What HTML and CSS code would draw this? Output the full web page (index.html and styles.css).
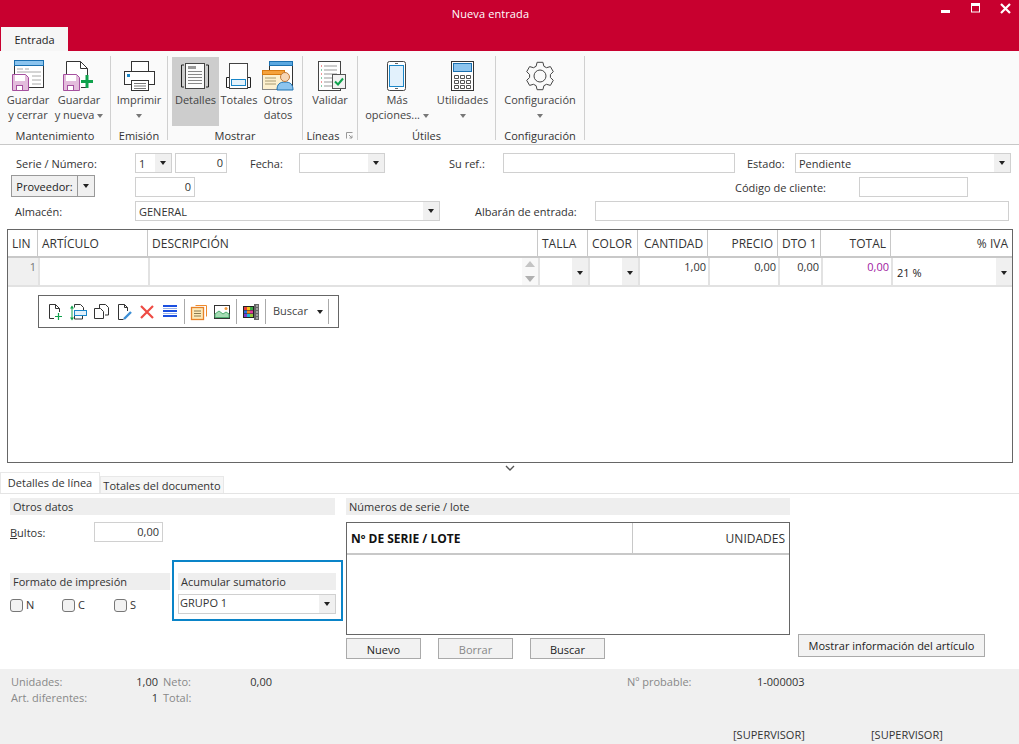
FILE: index.html
```html
<!DOCTYPE html>
<html lang="es">
<head>
    <meta charset="UTF-8">
    <title>Nueva entrada</title>
    <link rel="stylesheet" href="styles.css">
</head>
<body>
<div class="app">
    <header class="titlebar">
        <div class="title">Nueva entrada</div>
        <div class="win-btns">
            <svg width="10" height="10" viewBox="0 0 10 10"><rect x="0" y="7" width="9" height="3" fill="#fff"/></svg>
            <svg width="10" height="10" viewBox="0 0 10 10"><rect x="0.5" y="1" width="8" height="8" fill="none" stroke="#fff"/><rect x="0" y="0" width="9" height="3" fill="#fff"/></svg>
            <svg width="11" height="11" viewBox="0 0 11 11"><path d="M1 1l9 9M10 1l-9 9" stroke="#fff" stroke-width="2.2"/></svg>
        </div>
    </header>
    <div class="tabstrip"><div class="tab-main">Entrada</div></div>

    <div class="ribbon">
        <div class="rb-group g-mant">
            <div class="rb-btns">
                <div class="rb-btn b-48">
                    <svg class="rb-icon" viewBox="0 0 40 36"><rect x="6.5" y="2.5" width="29" height="27" fill="#fff" stroke="#333"/><rect x="6.5" y="2.5" width="29" height="5" fill="#8cc4ee" stroke="#1a70b0"/><path d="M9 11h6M17 11h4M9 14h24M24 18h9M24 22h9M24 26h9" stroke="#aaa"/><path d="M4.5 16.5h13l3 3v13h-16z" fill="#e3bcdc" stroke="#a5509f"/><rect x="7" y="17" width="10" height="6" fill="#fff"/><rect x="8.5" y="27.5" width="6" height="5" fill="#fff" stroke="#a5509f"/></svg>
                    <span>Guardar<br>y cerrar</span>
                </div>
                <div class="rb-btn b-50 b-gap">
                    <svg class="rb-icon" viewBox="0 0 40 36"><path d="M7.5 16V3.5h14l7 7V29.5H22" fill="#fff" stroke="#333"/><path d="M21.5 3.5v7h7" fill="none" stroke="#333"/><path d="M4.5 16.5h13l3 3v13h-16z" fill="#e3bcdc" stroke="#a5509f"/><rect x="7" y="17" width="10" height="6" fill="#fff"/><rect x="8.5" y="27.5" width="6" height="5" fill="#fff" stroke="#a5509f"/><path d="M28 17v13M22 23.5h12" stroke="#0fa24c" stroke-width="3"/></svg>
                    <span>Guardar<br>y nueva <i class="caret gray"></i></span>
                </div>
            </div>
            <div class="rb-label">Mantenimiento</div>
        </div>
        <div class="rb-group g-emis">
            <div class="rb-btns">
                <div class="rb-btn b-52">
                    <svg class="rb-icon" viewBox="0 0 40 36"><rect x="12.5" y="3.5" width="17" height="11" fill="#fff" stroke="#333"/><rect x="5.5" y="13.5" width="30" height="13" fill="#fff" stroke="#333"/><rect x="8" y="16" width="3" height="3" fill="#1a86c8"/><rect x="12.5" y="22.5" width="17" height="10" fill="#fff" stroke="#333"/><path d="M15 25.5h12M15 28h12M15 30.5h12" stroke="#777"/></svg>
                    <span>Imprimir<br><i class="caret gray"></i></span>
                </div>
            </div>
            <div class="rb-label">Emisión</div>
        </div>
        <div class="rb-group g-most">
            <div class="rb-btns">
                <div class="rb-btn b-47 active">
                    <svg class="rb-icon" viewBox="0 0 40 36"><rect x="9.5" y="5.5" width="19" height="25" fill="#fbfbfb" stroke="#444"/><rect x="12" y="8" width="8" height="3" fill="#999"/><path d="M12 13.5h14M12 16.5h14M12 19.5h14M12 22.5h14M12 25.5h14" stroke="#888"/><path d="M8 7H5.5v22H8M30 7h2.5v22H30" fill="none" stroke="#222"/></svg>
                    <span>Detalles</span>
                </div>
                <div class="rb-btn b-40">
                    <svg class="rb-icon" viewBox="0 0 40 36"><rect x="10.5" y="5.5" width="18" height="25" fill="#fff" stroke="#444"/><rect x="12.5" y="21.5" width="14" height="6" fill="#e4f2fb" stroke="#1a86c8"/><path d="M10 19.500H7.500v10H10M29 19.500h2.500v10H29" fill="none" stroke="#222"/></svg>
                    <span>Totales</span>
                </div>
                <div class="rb-btn b-38">
                    <svg class="rb-icon" viewBox="0 0 40 36"><rect x="10.500" y="3.500" width="23" height="24" fill="#fff" stroke="#333"/><rect x="10.500" y="3.500" width="23" height="4" fill="#5aa8e0" stroke="#1a70b0"/><rect x="3.500" y="13.500" width="22" height="18" fill="#fdf0cf" stroke="#888"/><rect x="3.500" y="12.500" width="22" height="4" fill="#f5a23c" stroke="#d87b10"/><path d="M6 20h11M6 23h11M6 26h11" stroke="#a89a70"/><path d="M18 32c0-6 3-8 8-8s8 2 8 8z" fill="#8cc4ee" stroke="#1a70b0"/><circle cx="26" cy="19" r="4.500" fill="#f7d6b5" stroke="#c07a3c"/></svg>
                    <span>Otros<br>datos</span>
                </div>
            </div>
            <div class="rb-label">Mostrar</div>
        </div>
        <div class="rb-group g-line">
            <div class="rb-btns">
                <div class="rb-btn b-50">
                    <svg class="rb-icon" viewBox="0 0 40 36"><rect x="8.500" y="3.500" width="22" height="29" fill="#fff" stroke="#444"/><path d="M14 8h13M14 12h13M14 16h13M14 20h8M14 24h8M14 28h8" stroke="#999"/><path d="M11 8h1M11 16h1M11 24h1" stroke="#d33"/><path d="M11 12h1M11 20h1M11 28h1" stroke="#0a9a50"/><rect x="22.500" y="16.500" width="13" height="14" fill="#f2f2f2" stroke="#555"/><path d="M25 23.500l3 3 5-6" fill="none" stroke="#0fa24c" stroke-width="2"/></svg>
                    <span>Validar</span>
                </div>
            </div>
            <div class="rb-label">Líneas<svg class="launcher" width="7" height="7" viewBox="0 0 7 7"><path d="M0.500 6.500v-6h6M3 3l3 3M6 3.500v2.500H3.500" fill="none" stroke="#999"/></svg></div>
        </div>
        <div class="rb-group g-util">
            <div class="rb-btns">
                <div class="rb-btn b-70">
                    <svg class="rb-icon" viewBox="0 0 40 36"><rect x="10.500" y="3.500" width="18" height="29" rx="2" fill="#fff" stroke="#444"/><rect x="12.500" y="7.500" width="14" height="21" fill="#e2f1fc" stroke="#1a86c8"/><path d="M18 5.500h3M18 30.500h3" stroke="#666"/></svg>
                    <span>Más<br>opciones... <i class="caret gray"></i></span>
                </div>
                <div class="rb-btn b-57 b-gap">
                    <svg class="rb-icon" viewBox="0 0 40 36"><rect x="8.500" y="3.500" width="22" height="29" fill="#fff" stroke="#333"/><rect x="10.500" y="5.500" width="18" height="8" fill="#8cc4ee" stroke="#1a70b0"/><path d="M11.500 17.500h4v3h-4zM17.500 17.500h4v3h-4zM23.500 17.500h4v3h-4zM11.500 22.500h4v3h-4zM17.500 22.500h4v3h-4zM23.500 22.500h4v3h-4zM11.500 27.500h4v3h-4zM17.500 27.500h4v3h-4zM23.500 27.500h4v3h-4z" fill="none" stroke="#555"/></svg>
                    <span>Utilidades<br><i class="caret gray"></i></span>
                </div>
            </div>
            <div class="rb-label">Útiles</div>
        </div>
        <div class="rb-group g-conf">
            <div class="rb-btns">
                <div class="rb-btn b-88">
                    <svg class="rb-icon" viewBox="0 0 40 36"><g transform="translate(20 18)" fill="none" stroke="#444" stroke-linejoin="round"><polygon points="-3.900,-9.700 -2.900,-13.700 2.900,-13.700 3.900,-9.700 6.500,-8.300 10.400,-9.400 13.300,-4.300 10.400,-1.500 10.400,1.500 13.300,4.300 10.400,9.400 6.500,8.300 3.900,9.700 2.900,13.700 -2.900,13.700 -3.900,9.700 -6.500,8.300 -10.400,9.400 -13.300,4.300 -10.400,1.500 -10.400,-1.500 -13.300,-4.300 -10.400,-9.400 -6.500,-8.300"/><circle r="6"/></g></svg>
                    <span>Configuración<br><i class="caret gray"></i></span>
                </div>
            </div>
            <div class="rb-label">Configuración</div>
        </div>
    </div>

    <div class="form">
        <div class="form-row">
            <label class="lbl-serie">Serie / Número:</label>
            <div class="combo w-num"><span>1</span><b><i class="caret"></i></b></div>
            <div class="input num w-numero">0</div>
            <label class="lbl-fecha">Fecha:</label>
            <div class="combo w-fecha"><span></span><b><i class="caret"></i></b></div>
            <label class="lbl-suref">Su ref.:</label>
            <div class="input w-suref"></div>
            <label class="lbl-estado">Estado:</label>
            <div class="combo w-estado"><span>Pendiente</span><b><i class="caret"></i></b></div>
        </div>
        <div class="form-row row-2">
            <div class="split-btn"><span>Proveedor:</span><b><i class="caret"></i></b></div>
            <div class="input num w-prov">0</div>
            <label class="lbl-codigo">Código de cliente:</label>
            <div class="input w-codigo"></div>
        </div>
        <div class="form-row row-3">
            <label class="lbl-almacen">Almacén:</label>
            <div class="combo w-almacen"><span>GENERAL</span><b><i class="caret"></i></b></div>
            <label class="lbl-albaran">Albarán de entrada:</label>
            <div class="input w-albaran"></div>
        </div>
    </div>

    <div class="lines">
        <div class="lines-head">
            <div>LIN</div>
            <div>ARTÍCULO</div>
            <div>DESCRIPCIÓN</div>
            <div>TALLA</div>
            <div>COLOR</div>
            <div class="h-cant">CANTIDAD</div>
            <div class="right">PRECIO</div>
            <div class="center">DTO 1</div>
            <div class="right">TOTAL</div>
            <div class="right">% IVA</div>
        </div>
        <div class="lines-row">
            <div class="cell-lin">1</div>
            <div></div>
            <div class="cell-desc">
                <div class="spin"><i class="tri up"></i><i class="tri down"></i></div>
            </div>
            <div class="cell-combo"><b><i class="caret"></i></b></div>
            <div class="cell-combo"><b><i class="caret"></i></b></div>
            <div class="right">1,00</div>
            <div class="right">0,00</div>
            <div class="right">0,00</div>
            <div class="right purple">0,00</div>
            <div class="cell-combo cell-iva"><span>21 %</span><b><i class="caret"></i></b></div>
        </div>
        <div class="toolbar">
            <svg width="18" height="18" viewBox="0 0 18 18"><path d="M8 15.500H3.500v-14h6l4 4V9M9.500 1.500v4h4" fill="none" stroke="#333"/><path d="M12.500 10v7M9 13.500h7" stroke="#0fa24c" stroke-width="1.200"/></svg>
            <svg width="18" height="18" viewBox="0 0 18 18"><path d="M5.500 4.500v-3h6l3 3V7M5.500 13v3h8v-3" fill="none" stroke="#333"/><rect x="5.500" y="7.500" width="12" height="5" fill="#e2f1fc" stroke="#1a86c8"/><path d="M3 3.500v12" stroke="#0fa24c"/><path d="M1 5.500l2-3 2 3zM1 14.500l2 3 2-3z" fill="#0fa24c"/></svg>
            <svg width="18" height="18" viewBox="0 0 18 18"><path d="M7.500 5V1.500h6l3 3V12H13" fill="none" stroke="#333"/><path d="M2.500 5.500h6l3 3v7h-9z" fill="#fff" stroke="#333"/></svg>
            <svg width="18" height="18" viewBox="0 0 18 18"><path d="M3.500 16.500v-15h6l3 3V8M3.500 16.500h5M9.500 1.500v3h3" fill="none" stroke="#333"/><path d="M9 16l7-7" stroke="#3d8fd6" stroke-width="2.400"/></svg>
            <svg width="18" height="18" viewBox="0 0 18 18"><path d="M3 3l12 12M15 3L3 15" stroke="#ee4b44" stroke-width="2.200"/></svg>
            <svg width="18" height="18" viewBox="0 0 18 18"><path d="M2 3h14M2 8h14M2 13h14" stroke="#1b4fe0" stroke-width="2"/><path d="M2 5.500h14M2 10.500h14" stroke="#9db4e8"/></svg>
            <i class="tb-sep"></i>
            <svg width="18" height="18" viewBox="0 0 18 18"><path d="M5.500 2.500h11v11" fill="none" stroke="#ee8a2c"/><rect x="1.500" y="4.500" width="12" height="12" fill="#fde9b8" stroke="#e6822a" stroke-width="1.300"/><path d="M4 8h7M4 10.500h7M4 13h7" stroke="#8a7a50"/></svg>
            <svg width="18" height="18" viewBox="0 0 18 18"><rect x="1.500" y="2.500" width="15" height="13" fill="#fff" stroke="#333"/><path d="M2 14.500V11l4-3 4 3 3-2 3 2v3.500z" fill="#a5dcb4" stroke="#4fae70"/><circle cx="13" cy="5.500" r="1.500" fill="#f59a3c"/></svg>
            <i class="tb-sep"></i>
            <svg width="18" height="18" viewBox="0 0 18 18"><rect x="1" y="3" width="11" height="12" fill="#222"/><rect x="2" y="4" width="3" height="3" fill="#e53a3a"/><rect x="5" y="4" width="3" height="3" fill="#f2c21c"/><rect x="8" y="4" width="3" height="3" fill="#39a845"/><rect x="2" y="7.500" width="3" height="3" fill="#2a6fe0"/><rect x="5" y="7.500" width="3" height="3" fill="#f08a1c"/><rect x="8" y="7.500" width="3" height="3" fill="#e53a9a"/><rect x="2" y="11" width="3" height="3" fill="#7a3ac8"/><rect x="5" y="11" width="3" height="3" fill="#1cb8d8"/><rect x="8" y="11" width="3" height="3" fill="#90c83a"/><rect x="12" y="1" width="5" height="16" fill="#666"/><path d="M14 3h2M14 6h2M14 9h2M14 12h2M14 15h2" stroke="#ddd"/></svg>
            <i class="tb-sep"></i>
            <span class="tb-text">Buscar</span>
            <i class="caret tb-caret"></i>
            <i class="tb-sep"></i>
        </div>
    </div>

    <div class="splitter"><svg width="10" height="6" viewBox="0 0 10 6"><path d="M1 1l4 4 4-4" fill="none" stroke="#555" stroke-width="1.400"/></svg></div>

    <div class="tabs2">
        <div class="tab2 on">Detalles de línea</div>
        <div class="tab2">Totales del documento</div>
    </div>

    <div class="detail">
        <div class="col-left">
            <div class="sect w-otros">Otros datos</div>
            <div class="bultos">
                <label><u>B</u>ultos:</label>
                <div class="input num w-bultos">0,00</div>
            </div>
            <div class="col-left-low">
                <div class="formato">
                    <div class="sect">Formato de impresión</div>
                    <div class="checks">
                        <div class="check"><i></i>N</div>
                        <div class="check"><i></i>C</div>
                        <div class="check"><i></i>S</div>
                    </div>
                </div>
                <div class="acumular">
                    <div class="sect">Acumular sumatorio</div>
                    <div class="combo w-grupo"><span>GRUPO 1</span><b><i class="caret"></i></b></div>
                </div>
            </div>
        </div>
        <div class="col-mid">
            <div class="sect">Números de serie / lote</div>
            <div class="serie-table">
                <div class="serie-head">
                    <div class="serie-c1">Nº DE SERIE / LOTE</div>
                    <div class="serie-c2">UNIDADES</div>
                </div>
            </div>
            <div class="serie-btns">
                <div class="btn">Nuevo</div>
                <div class="btn disabled">Borrar</div>
                <div class="btn">Buscar</div>
            </div>
        </div>
        <div class="col-right">
            <div class="btn btn-info">Mostrar información del artículo</div>
        </div>
    </div>

    <footer class="statusbar">
        <div class="st-row">
            <span class="st-label w-a">Unidades:</span><span class="st-val w-b">1,00</span>
            <span class="st-label w-c">Neto:</span><span class="st-val w-d">0,00</span>
            <span class="st-label w-e">Nº probable:</span><span class="st-text">1-000003</span>
        </div>
        <div class="st-row row-art">
            <span class="st-label w-a">Art. diferentes:</span><span class="st-val w-b">1</span>
            <span class="st-label w-c">Total:</span>
        </div>
        <div class="st-row row-user">
            <span class="st-text w-user">[SUPERVISOR]</span>
            <span class="st-text">[SUPERVISOR]</span>
        </div>
    </footer>
</div>
</body>
</html>
```

FILE: styles.css
```css
* {
    box-sizing: border-box;
}
body {
    margin: 0;
    background: #fff;
    font-family: "Open Sans", "Noto Sans", sans-serif;
    font-size: 11px;
    color: #333;
}
.app {
    width: 1019px;
    height: 744px;
    display: flex;
    flex-direction: column;
    overflow: hidden;
}

/* title bar */
.titlebar {
    height: 26px;
    background: #c8002f;
    color: #fff;
    display: flex;
    align-items: center;
}
.title {
    flex: 1;
    text-align: center;
    font-size: 11px;
    letter-spacing: 0.1px;
    padding-left: 40px;
}
.win-btns {
    width: 78px;
    padding-right: 8px;
    display: flex;
    justify-content: space-between;
    align-items: flex-start;
    height: 14px;
    margin-top: -6px;
}
.tabstrip {
    height: 25px;
    background: #c8002f;
    padding-top: 1px;
}
.tab-main {
    width: 67px;
    height: 24px;
    background: #f6f6f6;
    margin-left: 1px;
    color: #222;
    text-align: center;
    line-height: 25px;
}

/* ribbon */
.ribbon {
    height: 94px;
    background: #fafafa;
    border-bottom: 1px solid #c8c8c8;
    display: flex;
    padding-top: 5px;
}
.rb-group {
    height: 84px;
    border-right: 1px solid #d0d0d0;
    display: flex;
    flex-direction: column;
}
.g-mant { width: 111px; padding-left: 4px; }
.g-emis { width: 57px; padding-left: 2px; }
.g-most { width: 135px; padding-left: 4px; }
.g-line { width: 55px; padding-left: 2px; }
.g-util { width: 138px; padding-left: 4px; }
.g-conf { width: 89px; }
.rb-btns {
    display: flex;
    flex: none;
    height: 72px;
    margin-top: 1px;
}
.rb-btn {
    padding-top: 1px;
    text-align: center;
    line-height: 15px;
    color: #444;
    white-space: nowrap;
}
.rb-btn.active {
    background: #cdcdcd;
    height: 69px;
}
.rb-icon {
    width: 40px;
    height: 36px;
    display: block;
    margin: 0 auto -2px;
}
.b-38 { width: 38px; }
.b-40 { width: 40px; }
.b-47 { width: 47px; }
.b-48 { width: 48px; }
.b-50 { width: 50px; }
.b-52 { width: 52px; }
.b-57 { width: 57px; }
.b-70 { width: 70px; }
.b-88 { width: 88px; }
.b-gap { margin-left: 2px; }
.rb-label {
    flex: none;
    margin-left: -4px;
    text-align: center;
    line-height: 14px;
    color: #333;
}
.g-emis .rb-label, .g-line .rb-label { margin-left: -2px; }
.g-conf .rb-label { margin-left: 0; }
.launcher {
    margin-left: 7px;
    vertical-align: 1px;
}
.caret {
    display: inline-block;
    width: 0;
    height: 0;
    border-left: 3.5px solid transparent;
    border-right: 3.5px solid transparent;
    border-top: 4px solid #222;
    vertical-align: middle;
}
.caret.gray {
    border-top-color: #777;
}

/* form */
.form {
    height: 84px;
    padding-top: 8px;
}
.form-row {
    display: flex;
    height: 20px;
    align-items: center;
    margin-bottom: 4px;
}
.form-row label {
    color: #333;
    white-space: nowrap;
}
.input {
    height: 20px;
    border: 1px solid #d0d0d0;
    background: #fff;
    line-height: 17px;
    padding: 0 3px;
}
.input.num {
    text-align: right;
}
.combo {
    height: 20px;
    border: 1px solid #d0d0d0;
    display: flex;
    background: #fff;
}
.combo span {
    flex: 1;
    padding-left: 3px;
    line-height: 20px;
}
.combo b, .cell-combo b, .split-btn b {
    width: 16px;
    background: #f0f0f0;
    display: flex;
    align-items: center;
    justify-content: center;
}
.lbl-serie { margin-left: 16px; width: 119px; }
.w-num { width: 37px; }
.w-numero { margin-left: 3px; width: 52px; }
.lbl-fecha { margin-left: 23px; width: 49px; }
.w-fecha { width: 86px; }
.lbl-suref { margin-left: 64px; width: 54px; }
.w-suref { width: 232px; }
.lbl-estado { margin-left: 12px; width: 48px; }
.w-estado { width: 216px; }
.split-btn {
    margin: -2px 0 0 11px;
    width: 84px;
    height: 22px;
    border: 1px solid #999;
    background: #f0f0f0;
    display: flex;
    line-height: 21px;
    text-align: center;
}
.split-btn span {
    flex: 1;
    color: #222;
    border-right: 1px solid #999;
}
.split-btn b {
    width: 16px;
}
.w-prov { margin-left: 40px; width: 60px; }
.lbl-codigo { margin-left: 540px; width: 124px; }
.w-codigo { width: 109px; }
.lbl-almacen { margin-left: 15px; width: 120px; }
.w-almacen { width: 305px; }
.lbl-albaran { margin-left: 35px; width: 120px; }
.w-albaran { width: 414px; }

/* lines grid */
.lines {
    margin-left: 7px;
    width: 1006px;
    height: 234px;
    border: 1px solid #666;
    position: relative;
    color: #333;
}
.lines-head, .lines-row {
    display: grid;
    grid-template-columns: 30px 110px 390px 50px 50px 70px 70px 43px 70px 121px;
}
.lines-head {
    height: 28px;
    border-bottom: 2px solid #c8c8c8;
    font-size: 12px;
    line-height: 28px;
}
.lines-head div {
    border-right: 1px solid #c8c8c8;
    padding: 0 4px;
    white-space: nowrap;
    overflow: hidden;
}
.lines-head div:last-child {
    border-right: 0;
}
.lines-head .h-cant {
    padding-left: 6px;
}
.right { text-align: right; }
.center { text-align: center; }
.lines-row {
    height: 29px;
    border-bottom: 2px solid #e2e2e2;
    line-height: 17px;
}
.lines-row > div {
    border-left: 2px solid #e2e2e2;
    padding: 0 2px;
}
.lines-row > .cell-lin {
    border-left: 0;
    background: #f0f0f0;
    text-align: right;
    color: #777;
}
.lines-row > .cell-desc {
    display: flex;
    justify-content: flex-end;
    padding: 0;
}
.spin {
    width: 16px;
    background: #f8f8f8;
    display: flex;
    flex-direction: column;
    align-items: center;
    gap: 9px;
    padding-top: 3px;
}
.tri {
    width: 0;
    height: 0;
    border-left: 5px solid transparent;
    border-right: 5px solid transparent;
}
.tri.up { border-bottom: 6px solid #c4c4c4; }
.tri.down { border-top: 6px solid #b0b0b0; }
.lines-row .cell-combo {
    display: flex;
    justify-content: flex-end;
    padding: 0;
}
.cell-combo b {
    padding-top: 3px;
}
.cell-combo span {
    flex: 1;
    padding: 6px 0 0 4px;
    color: #222;
}
.purple {
    color: #a0209f;
}

/* floating toolbar */
.toolbar {
    position: absolute;
    left: 30px;
    top: 65px;
    width: 301px;
    height: 33px;
    border: 1px solid #666;
    background: #fff;
    display: flex;
    align-items: center;
    padding-left: 7px;
    gap: 5px;
}
.tb-sep {
    width: 1px;
    height: 25px;
    background: #aaa;
}
.tb-text {
    margin: -2px 0 0 2px;
    width: 36px;
    color: #444;
}
.tb-caret {
    margin-left: 3px;
}

.splitter {
    height: 10px;
    display: flex;
    justify-content: center;
    align-items: center;
}

/* lower tabs */
.tabs2 {
    height: 21px;
    display: flex;
    align-items: flex-end;
    border-bottom: 1px solid #e4e4e4;
}
.tab2 {
    height: 17px;
    width: 124px;
    background: #f6f6f6;
    border: 1px solid #e8e8e8;
    border-bottom: 0;
    color: #333;
    text-align: center;
    line-height: 17px;
    white-space: nowrap;
}
.tab2.on {
    height: 21px;
    width: 100px;
    background: #fff;
    line-height: 20px;
}

/* detail panel */
.detail {
    height: 175px;
    padding: 4px 0 0 10px;
    display: flex;
}
.col-left {
    width: 336px;
}
.sect {
    height: 17px;
    background: #eee;
    padding-left: 3px;
    line-height: 17px;
    color: #333;
    white-space: nowrap;
}
.w-otros { width: 325px; }
.bultos {
    display: flex;
    align-items: center;
    margin-top: 7px;
}
.bultos label { width: 84px; }
.w-bultos { width: 69px; }
.col-left-low {
    display: flex;
    margin-top: 18px;
}
.formato {
    width: 162px;
    padding-top: 13px;
}
.formato .sect { width: 160px; }
.checks {
    display: flex;
    margin-top: 8px;
}
.check {
    width: 52px;
    display: flex;
    align-items: center;
    gap: 3px;
    line-height: 14px;
}
.check i {
    width: 13px;
    height: 13px;
    border: 1px solid #777;
    border-radius: 3px;
    background: #f2f2f2;
}
.acumular {
    width: 171px;
    height: 61px;
    border: 2px solid #0a84c8;
    padding: 11px 5px 0 4px;
}
.w-grupo {
    margin-top: 4px;
}
.w-grupo span {
    padding-left: 1px;
    line-height: 16px;
}
.col-mid {
    width: 444px;
}
.serie-table {
    margin-top: 7px;
    height: 113px;
    border: 1px solid #666;
}
.serie-head {
    display: flex;
    height: 32px;
    border-bottom: 2px solid #c8c8c8;
    line-height: 31px;
    font-size: 12px;
}
.serie-c1 {
    width: 286px;
    padding-left: 4px;
    font-weight: 700;
    color: #111;
    border-right: 1px solid #c8c8c8;
}
.serie-c2 {
    flex: 1;
    text-align: right;
    padding-right: 4px;
}
.serie-btns {
    display: flex;
    gap: 17px;
    margin-top: 3px;
}
.btn {
    width: 75px;
    height: 21px;
    border: 1px solid #aaa;
    background: #f2f2f2;
    color: #222;
    text-align: center;
    line-height: 21px;
}
.btn.disabled {
    color: #888;
}
.col-right {
    margin-left: 8px;
    padding-top: 136px;
}
.btn.btn-info {
    width: 187px;
    height: 23px;
}

/* status bar */
.statusbar {
    flex: 1;
    background: #f0f0f0;
    padding-top: 5px;
}
.st-row {
    display: flex;
    height: 16px;
    line-height: 16px;
    white-space: nowrap;
}
.st-label { color: #888; }
.st-val { text-align: right; color: #333; }
.st-text { color: #333; }
.w-a { margin-left: 11px; width: 100px; }
.w-b { width: 47px; }
.w-c { margin-left: 5px; width: 40px; }
.w-d { width: 69px; }
.w-e { margin-left: 355px; width: 130px; }
.row-user {
    margin-top: 21px;
}
.w-user {
    margin-left: 733px;
    width: 138px;
}
```
